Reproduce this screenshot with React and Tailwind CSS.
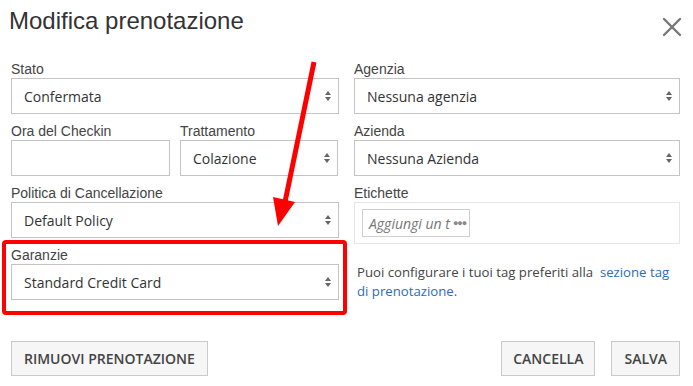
import React from 'react'

const labelCls = "block text-[14px] leading-[17px] text-[#444] font-['Liberation_Sans',Arial,sans-serif]"

function SelectArrows() {
  return (
    <svg width="8" height="12" viewBox="0 0 8 12" className="shrink-0">
      <path d="M4 1 L7 5 L1 5 Z" fill="#666" />
      <path d="M4 11 L7 7 L1 7 Z" fill="#666" />
    </svg>
  )
}

function FakeSelect({ value }) {
  return (
    <div className="h-[36px] border border-[#c4c4c4] bg-white flex items-center justify-between pl-[12px] pr-[6px]">
      <span className="text-[14px] text-[#333] font-['Open_Sans',sans-serif]">{value}</span>
      <SelectArrows />
    </div>
  )
}

function Field({ label, children }) {
  return (
    <div className="flex flex-col">
      <label className={labelCls}>{label}</label>
      {children}
    </div>
  )
}

export default function App() {
  return (
    <div className="relative w-[693px] h-[386px] bg-white overflow-hidden font-['Open_Sans',sans-serif]">
      <div className="flex items-start justify-between pl-[9px] pr-[10px] pt-[7px]">
        <h1 className="text-[24px] leading-[28px] text-[#333] font-['Liberation_Sans',Arial,sans-serif]">
          Modifica prenotazione
        </h1>
        <svg width="22" height="22" viewBox="0 0 22 22" className="mt-[9px]">
          <path d="M3 3 L19 19 M19 3 L3 19" stroke="#777" strokeWidth="2.4" strokeLinecap="round" />
        </svg>
      </div>

      <div className="grid grid-cols-[328px_326px] gap-x-[15px] pl-[11px] pt-[23px]">
        <div className="flex flex-col gap-[9px]">
          <Field label="Stato">
            <FakeSelect value="Confermata" />
          </Field>
          <div className="grid grid-cols-[159px_158px] gap-x-[10px]">
            <Field label="Ora del Checkin">
              <div className="h-[36px] border border-[#c4c4c4] bg-white" />
            </Field>
            <Field label="Trattamento">
              <FakeSelect value="Colazione" />
            </Field>
          </div>
          <Field label="Politica di Cancellazione">
            <FakeSelect value="Default Policy" />
          </Field>
          <Field label="Garanzie">
            <FakeSelect value="Standard Credit Card" />
          </Field>
        </div>

        <div className="flex flex-col gap-[9px]">
          <Field label="Agenzia">
            <FakeSelect value="Nessuna agenzia" />
          </Field>
          <Field label="Azienda">
            <FakeSelect value="Nessuna Azienda" />
          </Field>
          <Field label="Etichette">
            <div className="h-[42px] border border-[#e6e6e6] bg-white flex items-center pl-[7px]">
              <div className="h-[28px] w-[108px] border border-[#cfcfcf] flex items-center pl-[6px] gap-[3px]">
                <span className="text-[14px] italic text-[#777]">Aggiungi un t</span>
                <span className="text-[9px] text-[#888] tracking-[-1px]">●●●</span>
              </div>
            </div>
          </Field>
          <p className="pl-[3px] pr-[8px] pt-[10px] text-[13.2px] leading-[19px] text-[#444]">
            Puoi configurare i tuoi tag preferiti alla&nbsp; <a className="text-[#2d6db5]">sezione tag di prenotazione.</a>
          </p>
        </div>
      </div>

      <div className="flex justify-between pl-[11px] pr-[13px] pt-[40px]">
        <button className="h-[35px] px-[12px] bg-[#f6f6f6] border border-[#cacaca] text-[14px] font-semibold text-[#444]">
          RIMUOVI PRENOTAZIONE
        </button>
        <div className="flex gap-[16px]">
          <button className="h-[35px] px-[11px] bg-[#f6f6f6] border border-[#cacaca] text-[14px] font-semibold text-[#444]">
            CANCELLA
          </button>
          <button className="h-[35px] px-[12px] bg-[#f6f6f6] border border-[#cacaca] text-[14px] font-semibold text-[#444]">
            SALVA
          </button>
        </div>
      </div>

      {/* annotation overlay */}
      <div className="absolute left-[2px] top-[240px] w-[345px] h-[75px] border-[4px] border-[#ff0000] rounded-[4px] pointer-events-none" />
      <svg className="absolute left-0 top-0 pointer-events-none" width="693" height="386">
        <line x1="314" y1="62" x2="285" y2="202" stroke="#ff0000" strokeWidth="5" />
        <polygon points="273,197 295,202 278,226" fill="#ff0000" />
      </svg>
    </div>
  )
}
